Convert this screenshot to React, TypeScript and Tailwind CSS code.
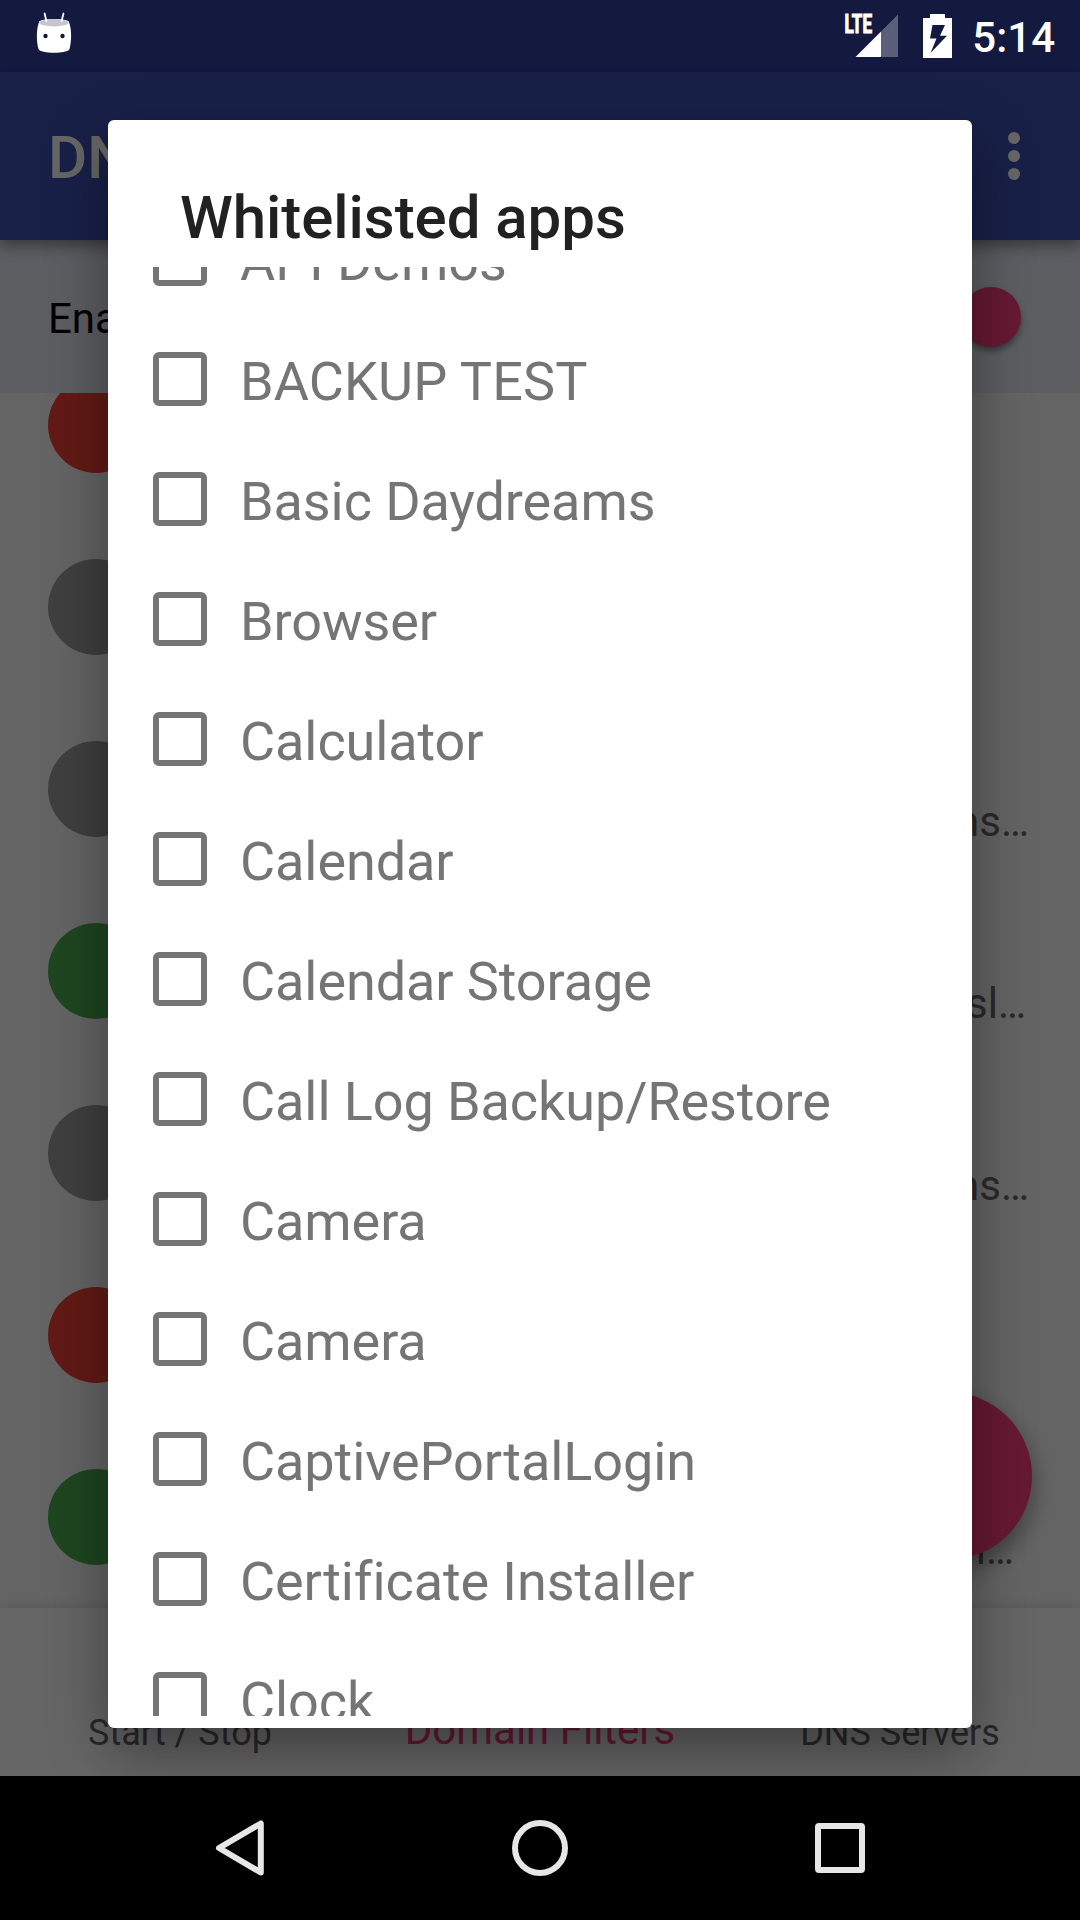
import React from "react";

const apps = [
  "API Demos",
  "BACKUP TEST",
  "Basic Daydreams",
  "Browser",
  "Calculator",
  "Calendar",
  "Calendar Storage",
  "Call Log Backup/Restore",
  "Camera",
  "Camera",
  "CaptivePortalLogin",
  "Certificate Installer",
  "Clock",
];

const filters = [
  { dot: "bg-[#f44336]", text: "", pad: "" },
  { dot: "bg-[#9e9e9e]", text: "", pad: "" },
  { dot: "bg-[#9e9e9e]", text: "ns…", pad: "pr-[3px]" },
  { dot: "bg-[#4caf50]", text: "sl…", pad: "pr-[6px]" },
  { dot: "bg-[#9e9e9e]", text: "ns…", pad: "pr-[3px]" },
  { dot: "bg-[#f44336]", text: "", pad: "" },
  { dot: "bg-[#4caf50]", text: "i…", pad: "pr-[18px]" },
];

function StatusBar() {
  return (
    <div className="flex h-[72px] items-start justify-between text-white">
      <svg className="ml-[36px] h-[72px] w-[36px]" viewBox="36 0 36 72">
        <path
          d="M39 22 C39 18 69 18 69 22 C72 30 71.500 42 69.500 49 C68 54 40 54 38.500 49 C36.500 42 36 30 39 22 Z"
          fill="#fff"
        />
        <ellipse cx="54" cy="22.700" rx="14.600" ry="3.700" fill="#c4c5cf" />
        <path d="M46.400 21 L44.600 13.500 M61.600 21 L63.500 13.500" stroke="#fff" strokeWidth="1.800" strokeLinecap="round" />
        <circle cx="45.500" cy="36" r="2.200" fill="#14183f" />
        <circle cx="62.500" cy="36" r="2.200" fill="#14183f" />
      </svg>
      <div className="flex">
        <svg className="h-[72px] w-[120px]" viewBox="840 0 120 72">
          <text
            x="844.500"
            y="33"
            textLength="27.500"
            lengthAdjust="spacingAndGlyphs"
            fill="#fff"
            stroke="#fff"
            strokeWidth="1.100"
            fontFamily="Roboto, sans-serif"
            fontWeight="700"
            fontSize="25"
          >
            LTE
          </text>
          <path d="M898 14.500 V57 H881 V31.500 Z" fill="#5c5f7b" />
          <path d="M881 31.500 V57 H855.500 Z" fill="#fff" />
          <path
            d="M930 14 H945 V18 H952 V58 H923 V18 H930 Z M932.500 25 L930 38.500 H936.500 L930.500 53 L947 35.700 H940 L945 25 Z"
            fill="#fff"
            fillRule="evenodd"
          />
        </svg>
        <div className="mr-[25px] ml-[12px] pt-[13px] text-[42px] leading-[50px] font-medium">5:14</div>
      </div>
    </div>
  );
}

function Background() {
  return (
    <div className="flex h-[1776px] flex-col overflow-hidden bg-[#fafafa]">
      <div className="h-[72px] shrink-0 bg-[#303f9f]" />
      <header className="z-10 flex h-[168px] shrink-0 items-center justify-between bg-[#3f51b5] pr-[60px] pl-[48px] text-white shadow-[0_6px_14px_rgba(0,0,0,0.4)]">
        <h1 className="pt-[4px] text-[60px] leading-[72px] font-medium">DN</h1>
        <div className="flex flex-col gap-[6px]">
          <span className="size-[12px] rounded-full bg-white" />
          <span className="size-[12px] rounded-full bg-white" />
          <span className="size-[12px] rounded-full bg-white" />
        </div>
      </header>
      <div className="flex h-[153px] shrink-0 items-center justify-between bg-[#e8eaf6] pr-[59px] pl-[48px]">
        <span className="pt-[3px] text-[42px] text-black">Ena</span>
        <span className="size-[60px] rounded-full bg-[#ff4081] shadow-[0_4px_6px_rgba(0,0,0,0.4)]" />
      </div>
      <div className="min-h-0 flex-1 overflow-hidden">
        <div className="-mt-[59px] flex flex-col">
          {filters.map((f, i) => (
            <div key={i} className="flex h-[182px] items-center justify-between pr-[48px] pl-[48px]">
              <span className={"size-[96px] rounded-full " + f.dot} />
              <span className={"pt-[65px] text-[42px] leading-[50px] text-[#696969] " + f.pad}>{f.text}</span>
            </div>
          ))}
        </div>
      </div>
      <nav className="z-10 grid h-[168px] shrink-0 grid-cols-3 items-end bg-white text-center whitespace-nowrap text-[#676767] shadow-[0_0_12px_rgba(0,0,0,0.15)]">
        <span className="pb-[22px] text-[36px] leading-[42px]">Start / Stop</span>
        <span className="pb-[21px] text-[42px] leading-[50px] text-[#ff4081]">Domain Filters</span>
        <span className="pb-[22px] text-[36px] leading-[42px]">DNS Servers</span>
      </nav>
    </div>
  );
}

function Dialog() {
  return (
    <section className="flex h-[1608px] w-[864px] flex-col rounded-[6px] bg-white pb-[12px] shadow-[0_24px_60px_rgba(0,0,0,0.4)]">
      <h2 className="h-[147px] shrink-0 pt-[62px] pl-[72px] text-[60px] leading-[72px] font-medium tracking-[-0.05px] text-[#212121]">
        Whitelisted apps
      </h2>
      <div className="min-h-0 flex-1 overflow-hidden">
        <ul className="-mt-[68px]">
          {apps.map((name, i) => (
            <li key={i} className="flex h-[120px] items-center gap-[33px] pl-[45px] text-[#757575]">
              <span className="size-[54px] rounded-[6px] border-6 border-[#757575]" />
              <span
                className={
                  name === name.toUpperCase()
                    ? "pt-[6px] text-[54px] leading-[64px] tracking-[0.12px]"
                    : "pt-[6px] text-[54px] leading-[64px] tracking-[-0.09px]"
                }
              >
                {name}
              </span>
            </li>
          ))}
        </ul>
      </div>
    </section>
  );
}

export default function App() {
  return (
    <div className="relative h-[1920px] w-[1080px] overflow-hidden bg-black font-[Roboto,sans-serif]">
      <Background />
      <span className="absolute top-[1392px] right-[48px] z-10 size-[168px] rounded-full bg-[#ff4081] shadow-[0_10px_24px_rgba(0,0,0,0.4)]" />
      <div className="absolute inset-x-0 top-0 z-20 flex h-[1776px] flex-col items-center overflow-hidden bg-black/60">
        <div className="h-[120px] w-full shrink-0">
          <StatusBar />
        </div>
        <Dialog />
      </div>
      <footer className="relative z-30 h-[144px] bg-black">
        <svg className="block h-[144px] w-[1080px]" viewBox="0 1776 1080 144" fill="none" stroke="#e6e6e6" strokeWidth="6" strokeLinejoin="round">
          <path d="M260.800 1823.500 V1872.500 L219 1848 Z" />
          <circle cx="540" cy="1848" r="25" />
          <rect x="818" y="1826" width="44" height="44" rx="1" />
        </svg>
      </footer>
    </div>
  );
}
